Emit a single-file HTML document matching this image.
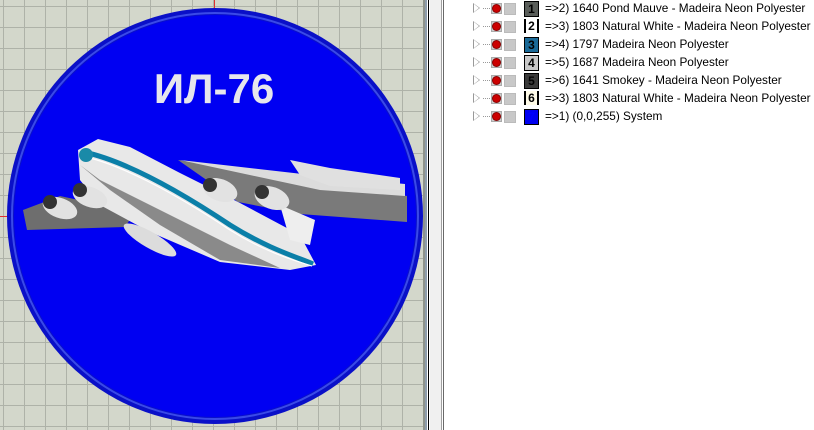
<!DOCTYPE html>
<html><head><meta charset="utf-8"><style>
html,body{margin:0;padding:0;width:814px;height:430px;overflow:hidden;background:#fff;font-family:"Liberation Sans",sans-serif}
#canvas{position:absolute;left:0;top:0;width:423px;height:430px;background-color:#d3d7cb;
background-image:linear-gradient(#aeb2a8 1px,transparent 1px),linear-gradient(90deg,#aeb2a8 1px,transparent 1px);
background-size:21px 21px;background-position:0 6px,3px 0}
.div1{position:absolute;left:423px;top:0;width:2px;height:430px;background:#8f948c}
.div2{position:absolute;left:425px;top:0;width:2px;height:430px;background:#8d9dac}
.div3{position:absolute;left:428px;top:0;width:1px;height:430px;background:#000}
.div4{position:absolute;left:430px;top:0;width:11px;height:430px;background:#f0f0f0}
.div5{position:absolute;left:441px;top:0;width:1px;height:430px;background:#a0a0a0}
.div6{position:absolute;left:443px;top:0;width:1px;height:430px;background:#696969}
.row{position:absolute;left:470px;height:18px;font-size:11.8px;color:#000;white-space:nowrap}
.tri{position:absolute;left:4px;top:3px;width:0;height:0;border-left:5px solid #fff;border-top:4px solid transparent;border-bottom:4px solid transparent}
.tri2{position:absolute;left:3px;top:2px;width:0;height:0;border-left:7px solid #999;border-top:5px solid transparent;border-bottom:5px solid transparent}
.dots{position:absolute;left:13px;top:7px;width:7px;border-top:1px dotted #999}
.eye{position:absolute;left:21px;top:2px;width:9px;height:9px;background:#ccc;border:1px solid #aaa}
.eye:after{content:"";position:absolute;left:1px;top:1px;width:7px;height:7px;border-radius:50%;background:#c00;box-shadow:0 0 0 1px #800}
.sq{position:absolute;left:34px;top:2px;width:10px;height:10px;background:#c8c8c8;border:1px solid #bbb}
.box{position:absolute;left:54px;top:0;width:13px;height:14px;font-size:12px;line-height:14px;text-align:center;font-weight:bold}
.txt{position:absolute;left:75px;top:0;line-height:14px}
</style></head><body>
<div id="canvas">
<div style="position:absolute;left:214px;top:0;width:1px;height:12px;background:#e03030"></div>
<div style="position:absolute;left:0;top:216px;width:8px;height:1px;background:#e03030"></div>
<svg width="423" height="430" style="position:absolute;left:0;top:0">
<circle cx="215" cy="216" r="208" fill="#0a10c8"/>
<circle cx="215" cy="216" r="203" fill="none" stroke="#3a4ae8" stroke-width="2"/>
<circle cx="215" cy="216" r="201" fill="#0000f2"/>
<text x="214" y="103" text-anchor="middle" font-family="Liberation Sans,DejaVu Sans,sans-serif" font-weight="bold" font-size="42" fill="#e6e6ec">ИЛ-76</text>
<polygon points="178,160 320,182 407,196 407,222 300,214 238,202" fill="#7a7a7a"/>
<polygon points="180,160 320,176 405,184 405,196 320,190" fill="#dcdcdc"/>
<polygon points="290,160 330,168 400,178 400,190 330,186 300,175" fill="#e0e0e0"/>
<polygon points="23,210 60,196 135,212 125,227 27,230" fill="#6e6e6e"/>
<polygon points="78,150 98,139 130,147 180,173 240,203 300,235 316,265 290,270 220,262 150,232 100,205 80,180" fill="#e8e8e8"/>
<polygon points="80,165 110,190 160,225 220,260 280,268 230,245 150,205 100,180" fill="#8a8a8a"/>
<polygon points="280,205 315,220 310,245 290,240" fill="#eeeeee"/>
<path d="M84,152 C120,160 170,185 230,225 C270,250 300,258 313,264" stroke="#0b7fa8" stroke-width="5" fill="none"/>
<path d="M86,157 C120,165 170,190 230,230 C268,254 300,262 312,266" stroke="#fff" stroke-width="1.2" fill="none"/>
<circle cx="86" cy="155" r="7" fill="#1a8aa8"/>
<g fill="#e2e2e2"><ellipse cx="60" cy="208" rx="18" ry="10" transform="rotate(20 60 208)"/><ellipse cx="90" cy="197" rx="18" ry="10" transform="rotate(20 90 197)"/><ellipse cx="220" cy="190" rx="18" ry="11" transform="rotate(20 220 190)"/><ellipse cx="272" cy="198" rx="18" ry="11" transform="rotate(20 272 198)"/></g>
<g fill="#333"><circle cx="50" cy="202" r="7"/><circle cx="80" cy="190" r="7"/><circle cx="210" cy="185" r="7"/><circle cx="262" cy="192" r="7"/></g>
<ellipse cx="150" cy="240" rx="30" ry="8" transform="rotate(30 150 240)" fill="#dcdcdc"/>
</svg>
</div>
<div class="div1"></div><div class="div2"></div><div class="div3"></div><div class="div4"></div><div class="div5"></div><div class="div6"></div>

<div class="row" style="top:1px"><div class="tri2"></div><div class="tri"></div><div class="dots"></div><div class="eye"></div><div class="sq"></div><div class="box" style="background:#5a5e5a;border:1px solid #000;color:#000">1</div><div class="txt">=&gt;2) 1640 Pond Mauve - Madeira Neon Polyester</div></div>
<div class="row" style="top:19px"><div class="tri2"></div><div class="tri"></div><div class="dots"></div><div class="eye"></div><div class="sq"></div><div class="box" style="background:#fff;border-left:2px solid #000;border-right:2px solid #000;width:11px">2</div><div class="txt">=&gt;3) 1803 Natural White - Madeira Neon Polyester</div></div>
<div class="row" style="top:37px"><div class="tri2"></div><div class="tri"></div><div class="dots"></div><div class="eye"></div><div class="sq"></div><div class="box" style="background:#1a6a98;border:1px solid #000">3</div><div class="txt">=&gt;4) 1797 Madeira Neon Polyester</div></div>
<div class="row" style="top:55px"><div class="tri2"></div><div class="tri"></div><div class="dots"></div><div class="eye"></div><div class="sq"></div><div class="box" style="background:#c8c8c8;border:1px solid #000">4</div><div class="txt">=&gt;5) 1687 Madeira Neon Polyester</div></div>
<div class="row" style="top:73px"><div class="tri2"></div><div class="tri"></div><div class="dots"></div><div class="eye"></div><div class="sq"></div><div class="box" style="background:#3a3a3a;border:1px solid #000">5</div><div class="txt">=&gt;6) 1641 Smokey - Madeira Neon Polyester</div></div>
<div class="row" style="top:91px"><div class="tri2"></div><div class="tri"></div><div class="dots"></div><div class="eye"></div><div class="sq"></div><div class="box" style="background:#fffbe8;border-left:2px solid #000;border-right:2px solid #000;width:11px">6</div><div class="txt">=&gt;3) 1803 Natural White - Madeira Neon Polyester</div></div>
<div class="row" style="top:109px"><div class="tri2"></div><div class="tri"></div><div class="dots"></div><div class="eye"></div><div class="sq"></div><div class="box" style="background:#0000f0;border:1px solid #000;color:#00f">7</div><div class="txt">=&gt;1) (0,0,255) System</div></div>
</body></html>
